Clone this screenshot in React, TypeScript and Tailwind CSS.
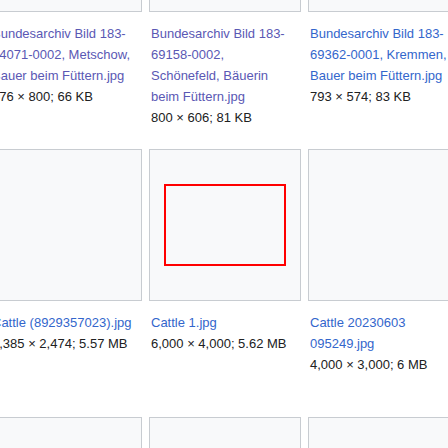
import React from 'react';

type Item = {
  name: string[];
  size: string;
  visited?: boolean;
  thumb?: boolean;
};

const rows: { height: string; items: Item[] }[] = [
  {
    height: 'h-[289px]',
    items: [
      { name: ['Bundesarchiv Bild 183-', '64071-0002, Metschow,', 'Bauer beim Füttern.jpg'], size: '576 × 800; 66 KB', visited: true },
      { name: ['Bundesarchiv Bild 183-', '69158-0002,', 'Schönefeld, Bäuerin', 'beim Füttern.jpg'], size: '800 × 606; 81 KB', visited: true },
      { name: ['Bundesarchiv Bild 183-', '69362-0001, Kremmen,', 'Bauer beim Füttern.jpg'], size: '793 × 574; 83 KB' },
    ],
  },
  {
    height: 'h-[268px]',
    items: [
      { name: ['Cattle (8929357023).jpg'], size: '4,385 × 2,474; 5.57 MB' },
      { name: ['Cattle 1.jpg'], size: '6,000 × 4,000; 5.62 MB', thumb: true },
      { name: ['Cattle 20230603', '095249.jpg'], size: '4,000 × 3,000; 6 MB' },
    ],
  },
  {
    height: 'h-[152px]',
    items: [
      { name: [], size: '' },
      { name: [], size: '' },
      { name: [], size: '' },
    ],
  },
];

const GalleryBox: React.FC<{ item: Item }> = ({ item }) => (
  <div className="w-[152px] shrink-0">
    <div className="w-[152px] h-[152px] bg-[#f8f9fa] border border-[#c8ccd1] flex items-center justify-center">
      {item.thumb ? <div className="w-[122px] h-[82px] border-2 border-solid border-[rgb(255,0,0)]" /> : null}
    </div>
    {item.size && (
      <div className="pt-[11px] px-[2px] text-[13px] leading-[21px] whitespace-nowrap text-[#202122]">
        {item.name.map((line, i) => (
          <div key={i} className={item.visited ? 'text-[rgb(90,88,180)]' : 'text-[rgb(51,102,204)]'}>
            {line}
          </div>
        ))}
        <div>{item.size}</div>
      </div>
    )}
  </div>
);

export default function App() {
  return (
    <div className="w-[448px] h-[448px] overflow-hidden bg-white font-['Liberation_Sans',Arial,sans-serif]">
      <div className="-mt-[140px] -ml-[10px] flex flex-col">
        {rows.map((row, r) => (
          <div key={r} className={'flex gap-[7px] ' + row.height}>
            {row.items.map((item, i) => (
              <GalleryBox key={i} item={item} />
            ))}
          </div>
        ))}
      </div>
    </div>
  );
}
